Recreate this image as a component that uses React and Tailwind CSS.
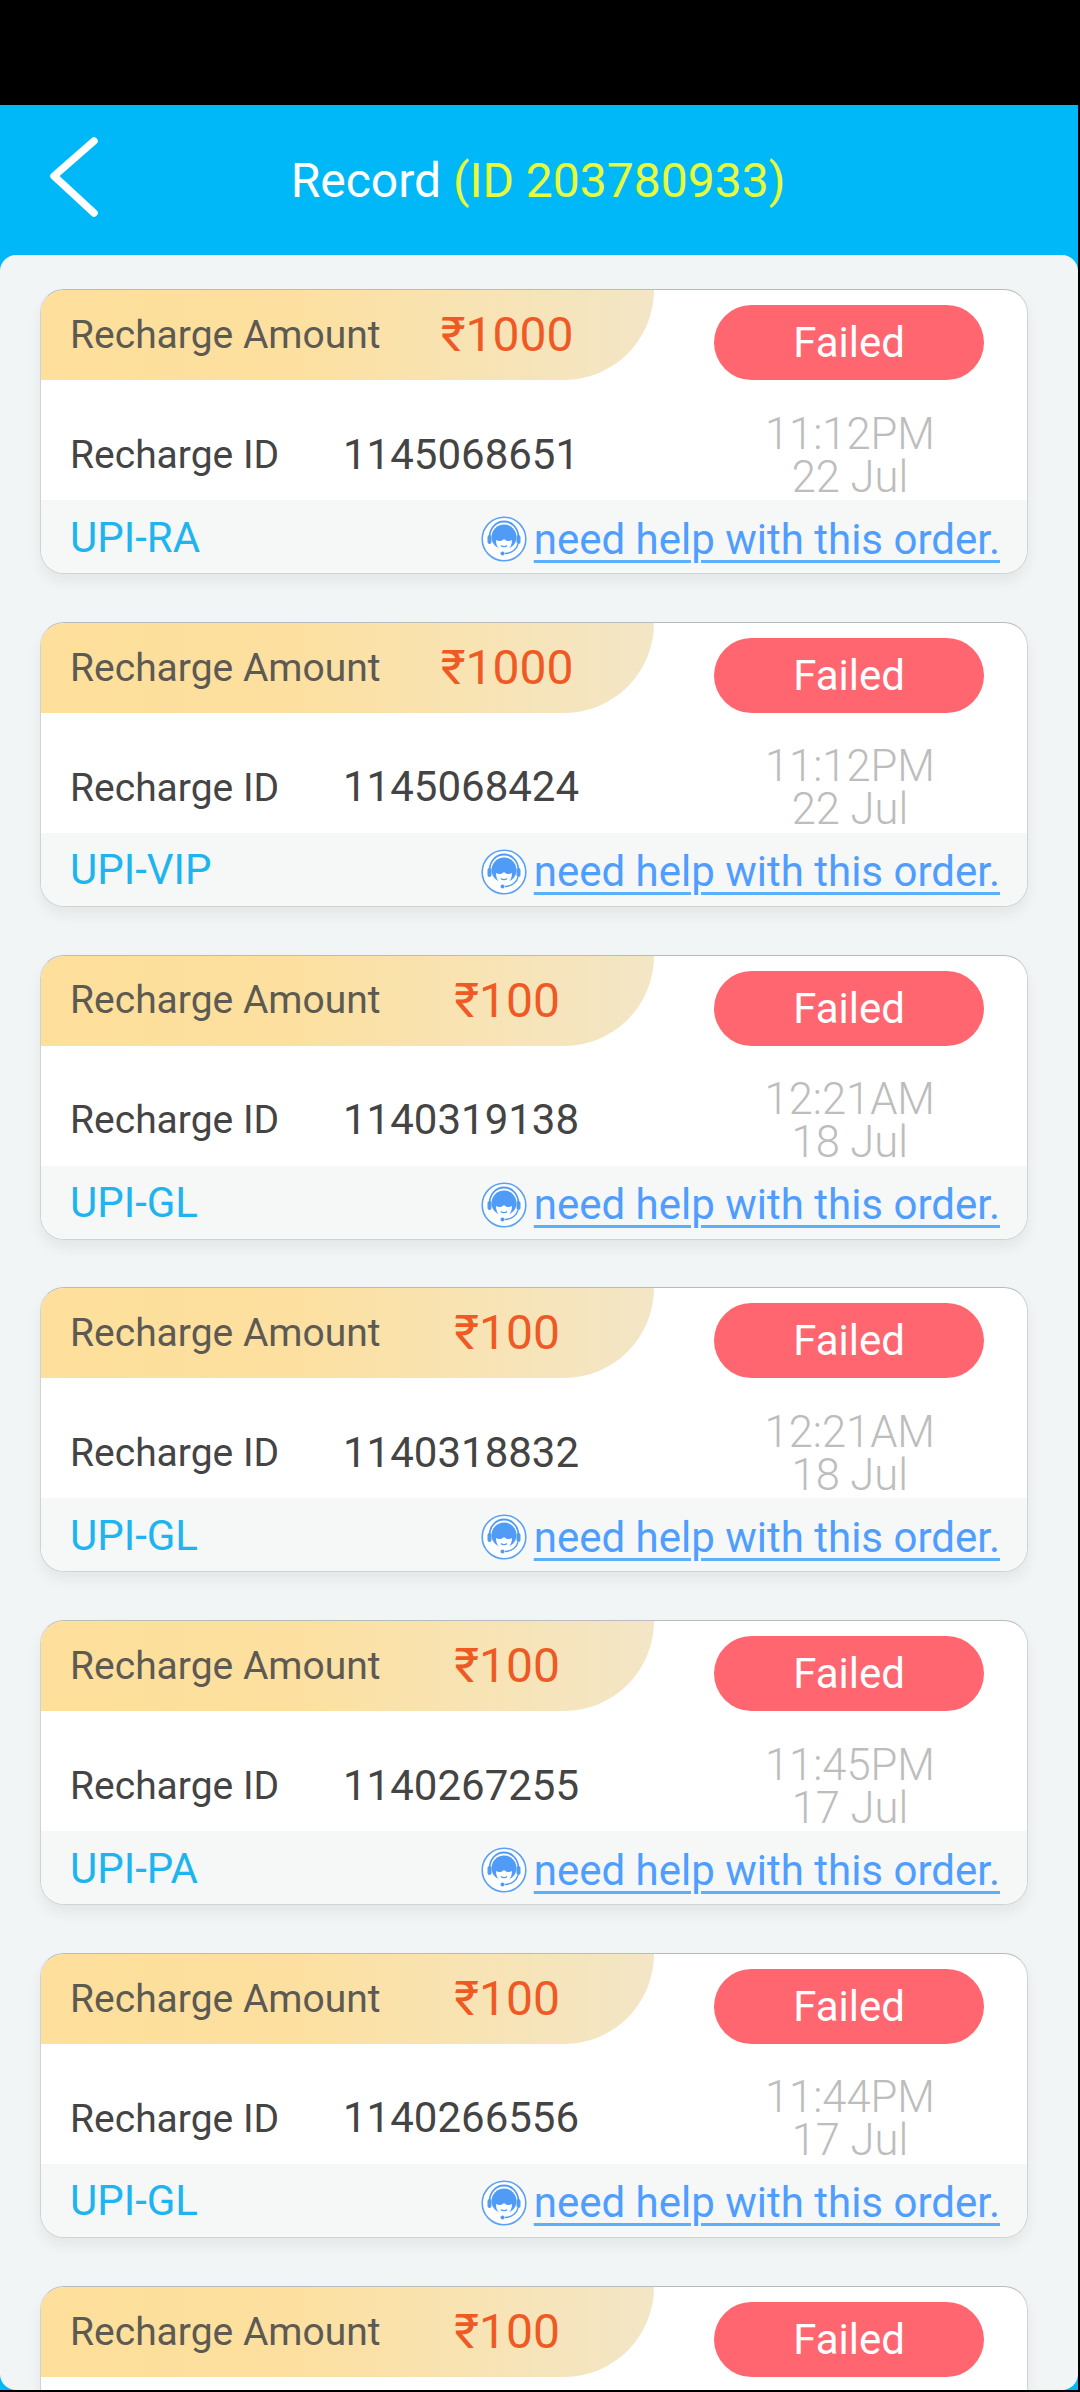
import React from 'react';

const records = [
    { amount: '₹1000', id: '1145068651', time: '11:12PM', date: '22 Jul', channel: 'UPI-RA' },
    { amount: '₹1000', id: '1145068424', time: '11:12PM', date: '22 Jul', channel: 'UPI-VIP' },
    { amount: '₹100', id: '1140319138', time: '12:21AM', date: '18 Jul', channel: 'UPI-GL' },
    { amount: '₹100', id: '1140318832', time: '12:21AM', date: '18 Jul', channel: 'UPI-GL' },
    { amount: '₹100', id: '1140267255', time: '11:45PM', date: '17 Jul', channel: 'UPI-PA' },
    { amount: '₹100', id: '1140266556', time: '11:44PM', date: '17 Jul', channel: 'UPI-GL' },
    { amount: '₹100', id: '1140266000', time: '11:44PM', date: '17 Jul', channel: 'UPI-GL' },
];

function AgentIcon() {
    return (
        <svg viewBox="0 0 46 46" className="w-[46px] h-[46px] shrink-0">
            <circle cx="23" cy="23" r="21.800" fill="#fff" stroke="#5aa2f5" strokeWidth="1.600" />
            {/* hair */}
            <circle cx="23" cy="21" r="12.500" fill="#4f9bf5" />
            {/* face */}
            <path d="M15 24c3 2 6 1 8-1 2 2 5 3 8 1 0 7-4 11-8 11s-8-4-8-11z" fill="#fff" />
            {/* headset */}
            <path d="M8.500 22C8.500 12 15 5.500 23 5.500S37.500 12 37.500 22" fill="none" stroke="#4f9bf5" strokeWidth="1.800" />
            <rect x="6.500" y="19" width="4" height="9" rx="2" fill="#4f9bf5" />
            <rect x="35.500" y="19" width="4" height="9" rx="2" fill="#4f9bf5" />
            {/* smile and mic */}
            <path d="M20 29.500c1.500 1.500 4.500 1.500 6 0" fill="none" stroke="#4f9bf5" strokeWidth="1.300" />
            <path d="M37 28c-1 5-6 9-13 9.500" fill="none" stroke="#4f9bf5" strokeWidth="1.300" />
            <circle cx="21.500" cy="37.500" r="2" fill="#4f9bf5" />
        </svg>
    );
}

function RecordCard({ record }) {
    return (
        <div className="rounded-[24px] border border-[#cfd3d4] border-t-[#b9bcbc] bg-white overflow-hidden shadow-[0_8px_14px_rgba(0,0,0,0.06)] h-[285px] shrink-0">
            <div className="flex justify-between h-[90px]">
                <div className="flex items-center w-[613px] h-[90px] pl-[29px] rounded-br-[100px] bg-gradient-to-r from-[#fedf9b] via-[#fde09f] via-40% to-[#f3e6c6]">
                    <span className="w-[342px] text-[39px] text-[#5c5a52] whitespace-nowrap">Recharge Amount</span>
                    <span className="w-[190px] text-center text-[48px] text-[#ef5a24] whitespace-nowrap">{record.amount}</span>
                </div>
                <div className="mt-[15px] mr-[43px] w-[270px] h-[75px] rounded-full bg-[#ff6670] flex items-center justify-center text-[42px] text-white">
                    Failed
                </div>
            </div>
            <div className="flex items-center h-[120px] pl-[29px] pr-[92px]">
                <span className="w-[273px] mt-[30px] text-[39px] text-[#444]">Recharge ID</span>
                <span className="mt-[28px] text-[42px] text-[#444]">{record.id}</span>
                <div className="ml-auto mt-[31px] text-center text-[43.500px] leading-[43px] font-light text-[#bdbdbd]">
                    <div>{record.time}</div>
                    <div>{record.date}</div>
                </div>
            </div>
            <div className="flex items-center justify-between h-[74px] pl-[29px] pr-[27px] bg-[#f6f7f7]">
                <span className="text-[42px] text-[#1db4ef]">{record.channel}</span>
                <div className="flex items-center gap-[7px] pt-[4px]">
                    <AgentIcon />
                    <span className="text-[42px] text-[#4f9eff] underline underline-offset-[6px] decoration-[3px] decoration-[#5ab0fa] whitespace-nowrap">
                        need help with this order.
                    </span>
                </div>
            </div>
        </div>
    );
}

export default function App() {
    return (
        <div className="w-[1080px] h-[2392px] bg-black overflow-hidden pt-[105px] font-['Roboto',sans-serif]">
            <div className="mr-[2px] h-[2285px] bg-[#00b8f7] flex flex-col">
                <div className="relative h-[150px] shrink-0 flex items-center justify-center pr-[2px] pt-[2px]">
                    <svg viewBox="0 0 52 84" className="absolute left-[48px] top-[30px] w-[52px] h-[84px]">
                        <path d="M46 6 L6 41 L46 78" fill="none" stroke="#fff" strokeWidth="7.500" strokeLinecap="round" strokeLinejoin="round" />
                    </svg>
                    <div className="text-[48px] text-white whitespace-nowrap">
                        Record <span className="text-[#e8fb3b]">(ID 203780933)</span>
                    </div>
                </div>
                <div className="flex-1 rounded-[16px] bg-[#f1f5f6] overflow-hidden pt-[34px] pl-[40px] pr-[50px] flex flex-col gap-[47.800px]">
                    {records.map((record) => (
                        <RecordCard key={record.id} record={record} />
                    ))}
                </div>
            </div>
        </div>
    );
}
